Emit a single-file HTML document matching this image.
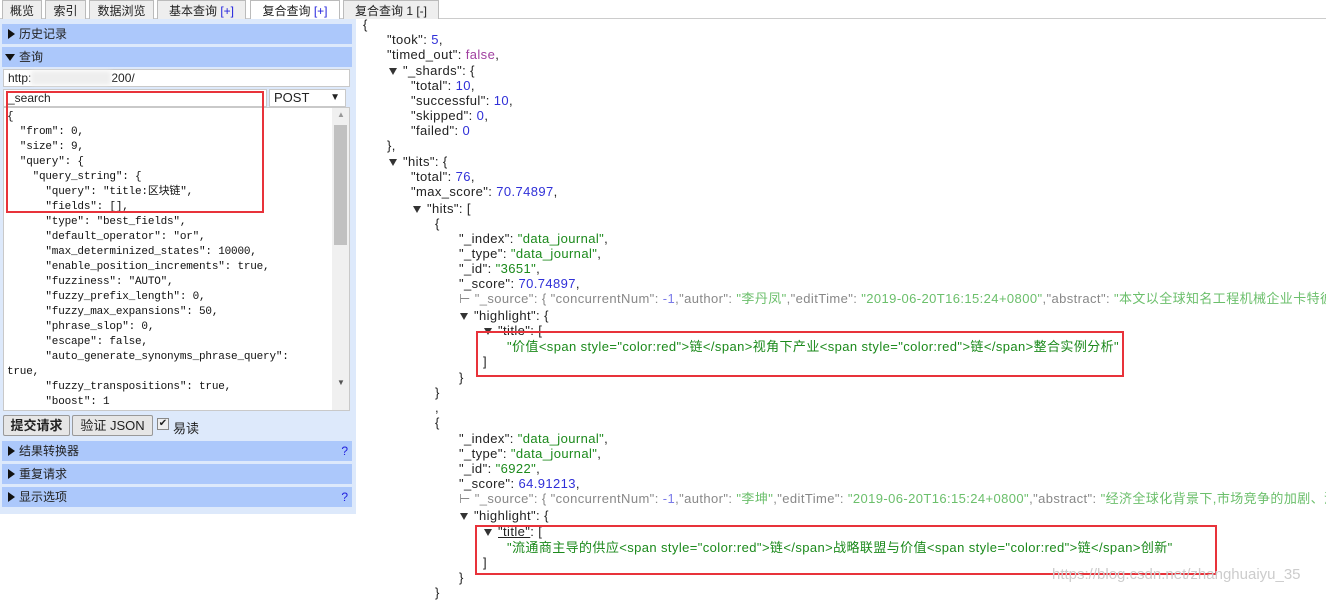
<!DOCTYPE html>
<html><head><meta charset="utf-8"><style>
*{margin:0;padding:0;box-sizing:border-box}
body{width:1326px;height:594px;overflow:hidden;background:#fff;font-family:"Liberation Sans","Noto Sans CJK SC",sans-serif;font-size:12px;color:#222;position:relative}
.tabs{position:absolute;left:0;top:0;width:1326px;height:19px;border-bottom:1px solid #ccc;background:#fff}
.tab{position:absolute;top:0;height:19px;background:#eee;border:1px solid #bbb;border-bottom:none;font-size:12px;line-height:20px;text-align:center;color:#222}
.tab.act{background:#fff;height:20px}
.b{color:#22d}
.left{position:absolute;left:0;top:19px;width:356px;height:495px;background:#dde9fb}
.hd{position:absolute;left:2px;width:350px;height:20px;background:#acc8fb;line-height:20px;padding-left:17px;font-size:12px}
.hd:before{content:"";position:absolute;left:6px;top:5px;border-left:7px solid #111;border-top:5px solid transparent;border-bottom:5px solid transparent}
.hd.open:before{left:3px;top:7px;border-top:7px solid #111;border-left:5px solid transparent;border-right:5px solid transparent;border-bottom:none}
.q{position:absolute;right:4px;color:#22d}
.inp{position:absolute;background:#fff;border:1px solid #c9c9c9;font-size:12px;line-height:16px;padding-left:4px}
.ta{position:absolute;left:3px;top:88px;width:347px;height:304px;background:#fff;border:1px solid #c9c9c9;overflow:hidden}
.ta pre{font-family:"Liberation Mono","Noto Sans CJK SC",monospace;font-size:11px;letter-spacing:-0.2px;line-height:15px;padding:2px 0 0 3px;color:#111}
.sb{position:absolute;right:0;top:0;width:17px;height:302px;background:#f0f0f0}
.btn{position:absolute;top:396px;height:21px;border:1px solid #999;background:#e6e6e6;font-size:13px;line-height:19px;text-align:center;border-radius:2px}
.red{position:absolute;border:2px solid #e8323a}
.r{position:absolute;left:0;top:0;width:1326px;font-size:13px;letter-spacing:0.4px}
.l{position:absolute;white-space:nowrap;line-height:14px}
.s{color:#1c8a1c}.n{color:#3030d8}.k{color:#222}.p{color:#a040a0}
.g{color:#888}.g .s{color:#6bbf6b}.g .n{color:#7a7ae8}
.ar{display:inline-block;width:0;height:0;border-top:7px solid #333;border-left:4px solid transparent;border-right:4px solid transparent;margin-right:6px;vertical-align:0}
</style></head><body>
<div class="tabs">
<div class="tab" style="left:2px;width:40px">概览</div>
<div class="tab" style="left:45px;width:41px">索引</div>
<div class="tab" style="left:89px;width:65px">数据浏览</div>
<div class="tab" style="left:157px;width:89px">基本查询 <span class="b">[+]</span></div>
<div class="tab act" style="left:250px;width:90px">复合查询 <span class="b">[+]</span></div>
<div class="tab" style="left:343px;width:96px">复合查询 1 [-]</div>
</div>
<div class="left">
<div class="hd" style="top:5px">历史记录</div>
<div class="hd open" style="top:28px">查询</div>
<div class="inp" style="left:3px;top:50px;width:347px;height:18px">http:<span style="color:#ddd;background:#eee;filter:blur(2px)">&nbsp;&nbsp;&nbsp;&nbsp;&nbsp;&nbsp;&nbsp;&nbsp;&nbsp;&nbsp;&nbsp;&nbsp;&nbsp;&nbsp;&nbsp;&nbsp;&nbsp;&nbsp;&nbsp;&nbsp;&nbsp;&nbsp;&nbsp;&nbsp;</span>200/</div>
<div class="inp" style="left:3px;top:70px;width:264px;height:18px">_search</div>
<div class="inp" style="left:269px;top:70px;width:77px;height:18px;font-size:13px">POST<span style="position:absolute;right:5px;font-size:10px">▼</span></div>
<div class="ta"><pre>{
  "from": 0,
  "size": 9,
  "query": {
    "query_string": {
      "query": "title:区块链",
      "fields": [],
      "type": "best_fields",
      "default_operator": "or",
      "max_determinized_states": 10000,
      "enable_position_increments": true,
      "fuzziness": "AUTO",
      "fuzzy_prefix_length": 0,
      "fuzzy_max_expansions": 50,
      "phrase_slop": 0,
      "escape": false,
      "auto_generate_synonyms_phrase_query":
true,
      "fuzzy_transpositions": true,
      "boost": 1</pre>
<div class="sb"><div style="position:absolute;left:2px;top:17px;width:13px;height:120px;background:#c1c1c1"></div><div style="position:absolute;top:2px;left:5px;font-size:8px;color:#999">▲</div><div style="position:absolute;top:270px;left:5px;font-size:8px;color:#555">▼</div></div>
</div>
<div class="btn" style="left:3px;width:67px;font-weight:bold">提交请求</div>
<div class="btn" style="left:72px;width:81px">验证 JSON</div>
<div style="position:absolute;left:157px;top:399px;width:12px;height:12px;border:1px solid #888;background:#eee;font-size:10px;line-height:10px;text-align:center">✔</div>
<div style="position:absolute;left:173px;top:399px;font-size:13px">易读</div>
<div class="hd" style="top:422px">结果转换器<span class="q">?</span></div>
<div class="hd" style="top:445px">重复请求</div>
<div class="hd" style="top:468px">显示选项<span class="q">?</span></div>
</div>
<div class="red" style="left:6px;top:91px;width:258px;height:122px"></div>

<div class="r">
<div class="l" style="left:363px;top:18px">{</div>
<div class="l" style="left:387px;top:33px">"took": <span class="n">5</span>,</div>
<div class="l" style="left:387px;top:48px">"timed_out": <span class="p">false</span>,</div>
<div class="l" style="left:389px;top:64px"><span class="ar"></span>"_shards": {</div>
<div class="l" style="left:411px;top:79px">"total": <span class="n">10</span>,</div>
<div class="l" style="left:411px;top:94px">"successful": <span class="n">10</span>,</div>
<div class="l" style="left:411px;top:109px">"skipped": <span class="n">0</span>,</div>
<div class="l" style="left:411px;top:124px">"failed": <span class="n">0</span></div>
<div class="l" style="left:387px;top:139px">},</div>
<div class="l" style="left:389px;top:155px"><span class="ar"></span>"hits": {</div>
<div class="l" style="left:411px;top:170px">"total": <span class="n">76</span>,</div>
<div class="l" style="left:411px;top:185px">"max_score": <span class="n">70.74897</span>,</div>
<div class="l" style="left:413px;top:202px"><span class="ar"></span>"hits": [</div>
<div class="l" style="left:435px;top:217px">{</div>
<div class="l" style="left:459px;top:232px">"_index": <span class="s">"data_journal"</span>,</div>
<div class="l" style="left:459px;top:247px">"_type": <span class="s">"data_journal"</span>,</div>
<div class="l" style="left:459px;top:262px">"_id": <span class="s">"3651"</span>,</div>
<div class="l" style="left:459px;top:277px">"_score": <span class="n">70.74897</span>,</div>
<div class="l g" style="left:459px;top:292px">⊢ "_source": { "concurrentNum": <span class="n">-1</span>,"author": <span class="s">"李丹凤"</span>,"editTime": <span class="s">"2019-06-20T16:15:24+0800"</span>,"abstract": <span class="s">"本文以全球知名工程机械企业卡特彼勒为例"</span></div>
<div class="l" style="left:460px;top:309px"><span class="ar"></span>"highlight": {</div>
<div class="l" style="left:484px;top:324px"><span class="ar"></span>"title": [</div>
<div class="l s" style="left:507px;top:340px">"价值&lt;span style="color:red"&gt;链&lt;/span&gt;视角下产业&lt;span style="color:red"&gt;链&lt;/span&gt;整合实例分析"</div>
<div class="l" style="left:483px;top:355px">]</div>
<div class="l" style="left:459px;top:371px">}</div>
<div class="l" style="left:435px;top:386px">}</div>
<div class="l" style="left:435px;top:401px">,</div>
<div class="l" style="left:435px;top:416px">{</div>
<div class="l" style="left:459px;top:432px">"_index": <span class="s">"data_journal"</span>,</div>
<div class="l" style="left:459px;top:447px">"_type": <span class="s">"data_journal"</span>,</div>
<div class="l" style="left:459px;top:462px">"_id": <span class="s">"6922"</span>,</div>
<div class="l" style="left:459px;top:477px">"_score": <span class="n">64.91213</span>,</div>
<div class="l g" style="left:459px;top:492px">⊢ "_source": { "concurrentNum": <span class="n">-1</span>,"author": <span class="s">"李坤"</span>,"editTime": <span class="s">"2019-06-20T16:15:24+0800"</span>,"abstract": <span class="s">"经济全球化背景下,市场竞争的加剧、消费者"</span></div>
<div class="l" style="left:460px;top:509px"><span class="ar"></span>"highlight": {</div>
<div class="l" style="left:484px;top:525px"><span class="ar"></span><u>"title"</u>: [</div>
<div class="l s" style="left:507px;top:541px">"流通商主导的供应&lt;span style="color:red"&gt;链&lt;/span&gt;战略联盟与价值&lt;span style="color:red"&gt;链&lt;/span&gt;创新"</div>
<div class="l" style="left:483px;top:556px">]</div>
<div class="l" style="left:459px;top:571px">}</div>
<div class="l" style="left:435px;top:586px">}</div>
</div>
<div class="red" style="left:476px;top:331px;width:648px;height:46px"></div>
<div class="red" style="left:475px;top:525px;width:742px;height:50px"></div>
<div style="position:absolute;left:1052px;top:566px;font-size:15px;color:#ccc">https://blog.csdn.net/zhanghuaiyu_35</div>
</body></html>
